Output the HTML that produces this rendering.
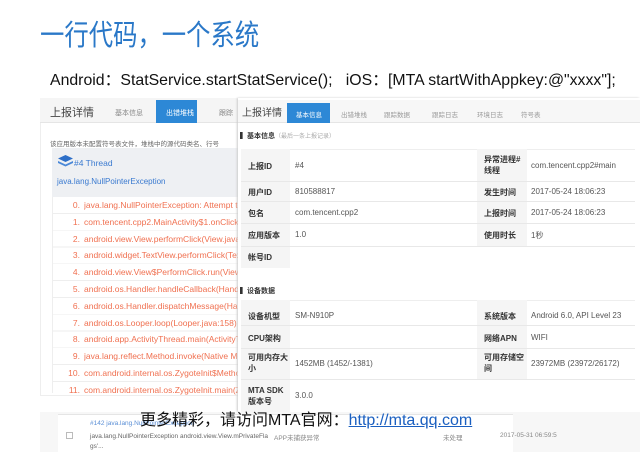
<!DOCTYPE html><html><head><meta charset="utf-8"><style>
*{margin:0;padding:0;box-sizing:border-box}
body{width:640px;height:452px;background:#fff;position:relative;overflow:hidden;font-family:"Liberation Sans","Noto Sans CJK SC",sans-serif}
.a{position:absolute;white-space:nowrap}
.lab{font-size:8px;font-weight:bold;color:#333}
.val{font-size:8px;color:#555}
.st{color:#f07050;font-size:8.5px}
</style></head><body>
<div class="a" style="left:40px;top:12px;font-size:29px;color:#2a78c8;transform:scaleX(0.84);transform-origin:left">一行代码，一个系统</div>
<div class="a" style="left:50px;top:66px;font-size:16px;color:#111;transform:scaleX(0.99);transform-origin:left">Android：StatService.startStatService();&nbsp;&nbsp; iOS：[MTA startWithAppkey:@"xxxx"];</div>

<!-- left panel -->
<div class="a" style="left:40px;top:98px;width:205px;height:298px;background:#fff;border:1px solid #eee"></div>
<div class="a" style="left:40px;top:98px;width:205px;height:25px;background:#f5f5f5;border-bottom:1px solid #e5e5e5"></div>
<div class="a" style="left:50px;top:104px;font-size:11px;color:#444">上报详情</div>
<div class="a" style="left:115px;top:108px;font-size:7px;color:#888">基本信息</div>
<div class="a" style="left:156px;top:100px;width:41px;height:23px;background:#2d88d6"></div>
<div class="a" style="left:166px;top:108px;font-size:7px;color:#fff">出错堆栈</div>
<div class="a" style="left:219px;top:108px;font-size:7px;color:#888">跟踪</div>
<div class="a" style="left:50px;top:138px;font-size:6.5px;color:#666">该应用版本未配置符号表文件，堆栈中的源代码类名、行号</div>
<div class="a" style="left:52px;top:148px;width:193px;height:50px;background:#eef0f3"></div>
<svg class="a" style="left:57px;top:154px" width="17" height="14"><path d="M8.5 1L16 4.5 8.5 8 1 4.5Z" fill="#2d6fc8"/><path d="M1 7l7.5 3.5L16 7v2l-7.5 3.5L1 9Z" fill="#4a88d8"/></svg>
<div class="a" style="left:74px;top:158px;font-size:8.5px;color:#3a7ad0">#4 Thread</div>
<div class="a" style="left:57px;top:177px;font-size:8px;color:#3a7ad0">java.lang.NullPointerException</div>
<div class="a" style="left:52px;top:197px;width:193px;height:196px;border-left:1px solid #eee;background:repeating-linear-gradient(#fff 0 16px,#eee 16px 16.8px)"></div>
<div class="a st" style="left:58px;top:197px;line-height:16.8px;text-align:right;width:22px">0.<br>1.<br>2.<br>3.<br>4.<br>5.<br>6.<br>7.<br>8.<br>9.<br>10.<br>11.</div>
<div class="a st" style="left:84px;top:197px;line-height:16.8px;width:161px;overflow:hidden">java.lang.NullPointerException: Attempt to<br>com.tencent.cpp2.MainActivity$1.onClick(S<br>android.view.View.performClick(View.java:5<br>android.widget.TextView.performClick(Text<br>android.view.View$PerformClick.run(View.ja<br>android.os.Handler.handleCallback(Handler<br>android.os.Handler.dispatchMessage(Handl<br>android.os.Looper.loop(Looper.java:158)<br>android.app.ActivityThread.main(ActivityTh<br>java.lang.reflect.Method.invoke(Native Met<br>com.android.internal.os.ZygoteInit$Metho<br>com.android.internal.os.ZygoteInit.main(Z</div>

<!-- right panel -->
<div class="a" style="left:238px;top:98px;width:402px;height:314px;background:#fff;box-shadow:-1px 0 2px #ccc"></div>
<div class="a" style="left:238px;top:100px;width:402px;height:23px;background:#f7f7f7;border-bottom:1px solid #e5e5e5"></div>
<div class="a" style="left:242px;top:104px;font-size:10px;color:#444">上报详情</div>
<div class="a" style="left:287px;top:103px;width:43px;height:20px;background:#2d88d6"></div>
<div class="a" style="left:296px;top:109px;font-size:6.5px;color:#fff">基本信息</div>
<div class="a" style="left:341px;top:109px;font-size:6.5px;color:#999">出错堆栈</div>
<div class="a" style="left:384px;top:109px;font-size:6.5px;color:#999">跟踪数据</div>
<div class="a" style="left:432px;top:109px;font-size:6.5px;color:#999">跟踪日志</div>
<div class="a" style="left:477px;top:109px;font-size:6.5px;color:#999">环境日志</div>
<div class="a" style="left:521px;top:109px;font-size:6.5px;color:#999">符号表</div>
<div class="a" style="left:240px;top:131px;font-size:7px;font-weight:bold;color:#333">▍基本信息<span style="font-weight:normal;color:#aaa;font-size:6px">（最后一条上报记录）</span></div>
<div class="a" style="left:241px;top:149px;width:394px;height:119px;background:#fff;border-top:1px solid #eee"></div>
<div class="a" style="left:241px;top:149px;width:49px;height:119px;background:#f5f5f5"></div>
<div class="a" style="left:477px;top:149px;width:50px;height:97px;background:#f5f5f5"></div>
<div class="a" style="left:241px;top:181px;width:394px;height:1px;background:#e8e8e8"></div>
<div class="a" style="left:241px;top:201px;width:394px;height:1px;background:#e8e8e8"></div>
<div class="a" style="left:241px;top:223px;width:394px;height:1px;background:#e8e8e8"></div>
<div class="a" style="left:241px;top:246px;width:394px;height:1px;background:#e8e8e8"></div>
<div class="a lab" style="left:248px;top:161px">上报ID</div><div class="a val" style="left:295px;top:161px">#4</div>
<div class="a lab" style="left:484px;top:154px;line-height:11px">异常进程#<br>线程</div><div class="a val" style="left:531px;top:161px">com.tencent.cpp2#main</div>
<div class="a lab" style="left:248px;top:187px">用户ID</div><div class="a val" style="left:295px;top:187px">810588817</div>
<div class="a lab" style="left:484px;top:187px">发生时间</div><div class="a val" style="left:531px;top:187px">2017-05-24 18:06:23</div>
<div class="a lab" style="left:248px;top:208px">包名</div><div class="a val" style="left:295px;top:208px">com.tencent.cpp2</div>
<div class="a lab" style="left:484px;top:208px">上报时间</div><div class="a val" style="left:531px;top:208px">2017-05-24 18:06:23</div>
<div class="a lab" style="left:248px;top:230px">应用版本</div><div class="a val" style="left:295px;top:230px">1.0</div>
<div class="a lab" style="left:484px;top:230px">使用时长</div><div class="a val" style="left:531px;top:230px">1秒</div>
<div class="a lab" style="left:248px;top:252px">帐号ID</div>

<div class="a" style="left:240px;top:286px;font-size:7px;font-weight:bold;color:#333">▍设备数据</div>
<div class="a" style="left:241px;top:300px;width:394px;height:112px;border-top:1px solid #eee"></div>
<div class="a" style="left:241px;top:300px;width:49px;height:112px;background:#f5f5f5"></div>
<div class="a" style="left:477px;top:300px;width:50px;height:79px;background:#f5f5f5"></div>
<div class="a" style="left:241px;top:325px;width:394px;height:1px;background:#e8e8e8"></div>
<div class="a" style="left:241px;top:348px;width:394px;height:1px;background:#e8e8e8"></div>
<div class="a" style="left:241px;top:379px;width:394px;height:1px;background:#e8e8e8"></div>
<div class="a lab" style="left:248px;top:311px">设备机型</div><div class="a val" style="left:295px;top:311px">SM-N910P</div>
<div class="a lab" style="left:484px;top:311px">系统版本</div><div class="a val" style="left:531px;top:311px">Android 6.0, API Level 23</div>
<div class="a lab" style="left:248px;top:333px">CPU架构</div>
<div class="a lab" style="left:484px;top:333px">网络APN</div><div class="a val" style="left:531px;top:333px">WIFI</div>
<div class="a lab" style="left:248px;top:352px;line-height:11px">可用内存大<br>小</div><div class="a val" style="left:295px;top:359px">1452MB (1452/-1381)</div>
<div class="a lab" style="left:484px;top:352px;line-height:11px">可用存储空<br>间</div><div class="a val" style="left:531px;top:359px">23972MB (23972/26172)</div>
<div class="a lab" style="left:248px;top:385px;line-height:11px">MTA SDK<br>版本号</div><div class="a val" style="left:295px;top:391px">3.0.0</div>

<!-- bottom -->
<div class="a" style="left:40px;top:412px;width:600px;height:40px;background:#f7f7f7"></div>
<div class="a" style="left:58px;top:414px;width:455px;height:38px;background:#fff;border-top:1px solid #e5e5e5"></div>
<div class="a" style="left:66px;top:432px;width:7px;height:7px;border:1px solid #bbb"></div>
<div class="a" style="left:90px;top:420px;font-size:6.5px;color:#5b8fd6">#142 java.lang.NullPointerException</div>
<div class="a" style="left:90px;top:432px;font-size:6.5px;color:#666;line-height:10px">java.lang.NullPointerException android.view.View.mPrivateFla<br>gs'...</div>
<div class="a" style="left:274px;top:432px;font-size:6.5px;color:#888">APP未捕获异常</div>
<div class="a" style="left:443px;top:432px;font-size:6.5px;color:#888">未处理</div>
<div class="a" style="left:500px;top:432px;font-size:6.5px;color:#888">2017-05-31 06:59:5</div>
<div class="a" style="left:140px;top:406px;font-size:16px;color:#111">更多精彩，请访问MTA官网：<span style="color:#1a5fc0;text-decoration:underline">http://mta.qq.com</span></div>
</body></html>
